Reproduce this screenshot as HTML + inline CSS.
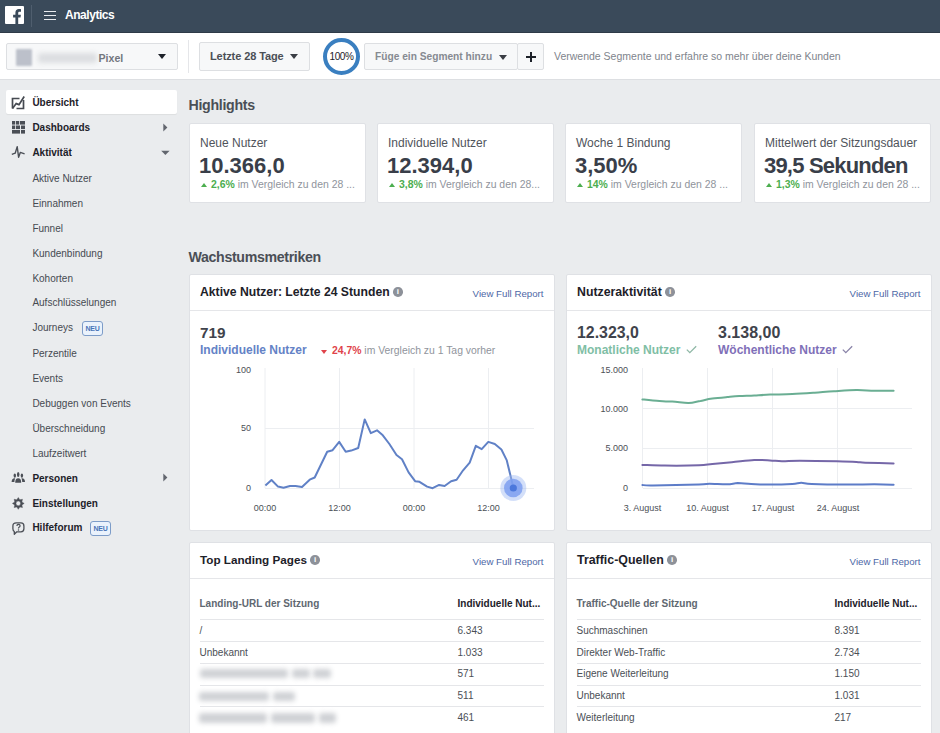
<!DOCTYPE html>
<html><head><meta charset="utf-8">
<style>
*{box-sizing:border-box;margin:0;padding:0}
html,body{width:940px;height:733px;overflow:hidden;background:#eaecee;font-family:"Liberation Sans",sans-serif;color:#1d2129}
.abs{position:absolute}
.t{position:absolute;white-space:nowrap;line-height:1}
#hdr{position:absolute;left:0;top:0;width:940px;height:33px;background:#3a4a5a;border-bottom:1px solid #2f3b48}
#tb{position:absolute;left:0;top:33px;width:940px;height:47px;background:#fff;border-bottom:1px solid #dddfe2}
.btn{position:absolute;background:#f7f8f9;border:1px solid #dddfe2;border-radius:2px}
.caret{position:absolute;width:0;height:0;border-left:4.4px solid transparent;border-right:4.4px solid transparent;border-top:5px solid #4b4f56}
.card{position:absolute;background:#fff;border:1px solid #dfe1e5;border-radius:2px}
.side{position:absolute;left:32.4px;font-size:10px;color:#464a51;white-space:nowrap;line-height:1}
.sideb{font-weight:bold;color:#1d2129}
.neu{position:absolute;border:1px solid #7d9cc8;background:#eaf2fc;color:#4a75b8;font-size:7px;font-weight:bold;border-radius:3px;width:21px;height:15px;line-height:13px;text-align:center;letter-spacing:-0.2px}
.info{position:absolute;width:10px;height:10px;border-radius:50%;background:#90949c;color:#fff;font-size:8px;font-weight:bold;text-align:center;line-height:10px}
.info2{display:inline-block;width:9.6px;height:9.6px;border-radius:50%;background:#8d9199;color:#fff;font-size:8px;font-weight:bold;text-align:center;line-height:10px;margin-left:3.5px;vertical-align:top;position:relative;top:1.4px}
.vfr{position:absolute;font-size:9.7px;color:#4d67a6;white-space:nowrap;line-height:1}
.row{position:absolute;height:1px;background:#e5e6e9}
.cell{position:absolute;font-size:10px;color:#4b4f56;white-space:nowrap;line-height:1}
.ax{position:absolute;font-size:9px;color:#4b4f56;white-space:nowrap;line-height:1}
.blur{position:absolute;background:#cfd1d5;filter:blur(2.8px);border-radius:3px}
</style></head><body>

<!-- header -->
<div id="hdr">
  <div class="abs" style="left:5px;top:5.5px;width:18.5px;height:18.8px;background:#fff;border-radius:1px;overflow:hidden">
    <svg width="19" height="19" viewBox="0 0 19 19" style="position:absolute;left:0;top:0"><path d="M13.2 19V11.6h2.3l.4-2.8h-2.7V7.1c0-.8.2-1.4 1.4-1.4h1.4V3.2c-.3 0-1.1-.1-2.1-.1-2.1 0-3.5 1.3-3.5 3.6v2.1H8.1v2.8h2.3V19z" fill="#3a4a5a"/></svg>
  </div>
  <div class="abs" style="left:31px;top:5px;width:1px;height:22px;background:#4f5e6e"></div>
  <div class="abs" style="left:44px;top:10.5px;width:12px;height:1.2px;background:#e8ebef"></div>
  <div class="abs" style="left:44px;top:14.5px;width:12px;height:1.2px;background:#e8ebef"></div>
  <div class="abs" style="left:44px;top:18.7px;width:12px;height:1.2px;background:#e8ebef"></div>
  <div class="t" style="left:65px;top:9px;font-size:12px;font-weight:bold;color:#fff;letter-spacing:-0.45px">Analytics</div>
</div>

<!-- toolbar -->
<div id="tb">
  <div class="btn" style="left:6px;top:10px;width:172px;height:27px">
    <div class="blur" style="left:8.5px;top:4.5px;width:16px;height:17px;background:#bcc0ca;filter:blur(1.2px);border-radius:1px"></div>
    <div class="blur" style="left:31px;top:8.5px;width:59px;height:10px;background:#dcdee1;filter:blur(2.5px)"></div>
    <div class="t" style="left:91.5px;top:8.5px;font-size:10.6px;font-weight:bold;color:#72767e">Pixel</div>
    <div class="caret" style="left:151px;top:10px;border-top-color:#1d2129"></div>
  </div>
  <div class="abs" style="left:188px;top:7px;width:1px;height:33px;background:#e5e6e9"></div>
  <div class="btn" style="left:199px;top:9px;width:111px;height:29px">
    <div class="t" style="left:10px;top:8.3px;font-size:11px;font-weight:bold;color:#4b4f56;letter-spacing:-0.1px">Letzte 28 Tage</div>
    <div class="caret" style="left:89.5px;top:11px;border-top-color:#3a3d44"></div>
  </div>
  <div class="abs" style="left:323px;top:5px;width:37px;height:37px;border-radius:50%;border:4px solid #3a7fc0;background:#fff"></div>
  <div class="t" style="left:327px;top:19px;width:29px;text-align:center;font-size:10px;color:#1d2129;letter-spacing:-0.4px">100%</div>
  <div class="btn" style="left:364px;top:10px;width:154px;height:27px">
    <div class="t" style="left:10px;top:8px;font-size:10.2px;font-weight:bold;color:#868a91">Füge ein Segment hinzu</div>
    <div class="caret" style="left:134px;top:10.5px;border-top-color:#3a3d44"></div>
  </div>
  <div class="btn" style="left:517px;top:10px;width:27px;height:27px">
    <div class="abs" style="left:8px;top:12.3px;width:10px;height:1.3px;background:#1d2129"></div>
    <div class="abs" style="left:12.4px;top:8px;width:1.3px;height:10px;background:#1d2129"></div>
  </div>
  <div class="t" style="left:554px;top:18px;font-size:10.5px;color:#80848c">Verwende Segmente und erfahre so mehr über deine Kunden</div>
</div>

<!-- sidebar -->
<div class="abs" style="left:6px;top:90px;width:171px;height:24px;background:#fff;border-radius:2px;box-shadow:0 1px 1px rgba(0,0,0,.06)"></div>
<div class="side sideb" style="top:98px">Übersicht</div>
<div class="side sideb" style="top:123px">Dashboards</div>
<div class="side sideb" style="top:148px">Aktivität</div>
<div class="side" style="top:173.5px">Aktive Nutzer</div>
<div class="side" style="top:198.5px">Einnahmen</div>
<div class="side" style="top:223.5px">Funnel</div>
<div class="side" style="top:248.5px">Kundenbindung</div>
<div class="side" style="top:273.5px">Kohorten</div>
<div class="side" style="top:298.4px">Aufschlüsselungen</div>
<div class="side" style="top:323.4px">Journeys</div>
<div class="side" style="top:348.5px">Perzentile</div>
<div class="side" style="top:373.5px">Events</div>
<div class="side" style="top:398.6px">Debuggen von Events</div>
<div class="side" style="top:423.6px">Überschneidung</div>
<div class="side" style="top:448.8px">Laufzeitwert</div>
<div class="side sideb" style="top:473.9px">Personen</div>
<div class="side sideb" style="top:498.9px">Einstellungen</div>
<div class="side sideb" style="top:523.4px">Hilfeforum</div>

<svg class="abs" style="left:0;top:85px" width="185" height="460" viewBox="0 85 185 460">
  <g fill="none" stroke="#464a51" stroke-width="1.7" stroke-linejoin="miter">
    <path d="M19.5,98.5 H12.5 V108.5"/>
    <path d="M16.5,108.5 H23.5 V100"/>
    <path d="M12.5,108.5 L16.2,103.6 L19,104.6 L24.2,96.5"/>
  </g>
  <g fill="#4b4f56">
    <rect x="12" y="121" width="3.2" height="3.6"/><rect x="16" y="121" width="3.2" height="3.6"/><rect x="20" y="121" width="5" height="3.6"/>
    <rect x="12" y="125.5" width="3.2" height="3.6"/><rect x="16" y="125.5" width="4" height="3.6"/><rect x="21" y="125.5" width="4" height="3.6"/>
    <rect x="12" y="130" width="8" height="3.6"/><rect x="21" y="130" width="4" height="3.6"/>
  </g>
  <path d="M11.8,154.3 L15.2,153.2 L17.2,146.6 L18.6,157.2 L20.3,152.4 L24.6,153.8" fill="none" stroke="#4b4f56" stroke-width="1.4" stroke-linejoin="round"/>
  <path d="M163.3,123.6 L167.4,127.5 L163.3,131.4 Z" fill="#62666e"/>
  <path d="M161.2,150.8 L169.6,150.8 L165.4,155 Z" fill="#62666e"/>
  <path d="M163.3,473.6 L167.4,477.5 L163.3,481.4 Z" fill="#62666e"/>
  <g fill="#4b4f56">
    <ellipse cx="18.2" cy="474.4" rx="1.25" ry="2.5"/>
    <path d="M15.2,482.8 C15.2,479.6 16.2,478.3 18.2,478.3 C20.2,478.3 21.2,479.6 21.2,482.8 Z"/>
    <ellipse cx="14.8" cy="475.6" rx="1.2" ry="2.2"/>
    <path d="M11.6,482 C11.6,479.6 12.6,478.2 14.6,478.2 L15.2,478.4 C14.6,479.3 14.4,480.6 14.4,482 Z"/>
    <ellipse cx="21.9" cy="475.6" rx="1.2" ry="2.2"/>
    <path d="M25,482 C25,479.6 24,478.2 22,478.2 L21.4,478.4 C22,479.3 22.2,480.6 22.2,482 Z"/>
  </g>
  <g transform="translate(18.3,503.4)">
    <path fill="#4b4f56" fill-rule="evenodd" stroke="#4b4f56" stroke-width="0.4" stroke-linejoin="round" d="M0.00,-5.90 L1.49,-3.60 L4.17,-4.17 L3.60,-1.49 L5.90,0.00 L3.60,1.49 L4.17,4.17 L1.49,3.60 L0.00,5.90 L-1.49,3.60 L-4.17,4.17 L-3.60,1.49 L-5.90,0.00 L-3.60,-1.49 L-4.17,-4.17 L-1.49,-3.60 Z M2.3,0 A2.3,2.3 0 1 0 -2.3,0 A2.3,2.3 0 1 0 2.3,0 Z"/>
  </g>
  <path d="M16.3,522.9 H20.9 Q23.9,522.9 23.9,525.9 V528.8 Q23.9,531.8 20.9,531.8 H16.8 L14.3,534.3 V531.5 Q12.9,530.8 12.9,528.8 V525.9 Q12.9,522.9 16.3,522.9 Z" fill="none" stroke="#4b4f56" stroke-width="1.3" stroke-linejoin="round"/>
  <path d="M16.9,525.9 Q16.9,524.3 18.5,524.3 Q20.1,524.3 20.1,525.8 Q20.1,526.8 19,527.3 Q18.5,527.6 18.5,528.4" fill="none" stroke="#4b4f56" stroke-width="1.2"/>
  <circle cx="18.5" cy="530" r="0.75" fill="#4b4f56"/>
</svg>
<div class="neu" style="left:82px;top:320.5px">NEU</div>
<div class="neu" style="left:90px;top:520.5px">NEU</div>
<!-- main -->
<div class="t" style="left:188.5px;top:98px;font-size:14.2px;font-weight:bold;color:#4b4f56;letter-spacing:-0.3px">Highlights</div>
<div class="card" style="left:189px;top:123px;width:177px;height:80px">
  <div class="t" style="left:10px;top:13.4px;font-size:12px;color:#50545b">Neue Nutzer</div>
  <div class="t" style="left:9px;top:31px;font-size:22px;font-weight:bold;color:#393e49">10.366,0</div>
  <div class="abs" style="left:10.5px;top:58.5px;width:0;height:0;border-left:3.5px solid transparent;border-right:3.5px solid transparent;border-bottom:4.5px solid #4cae4f"></div>
  <div class="t" style="left:21px;top:56px;font-size:10.45px;color:#90949c"><b style="color:#4cae4f">2,6%</b> im Vergleich zu den 28 ...</div>
</div>
<div class="card" style="left:377px;top:123px;width:177px;height:80px">
  <div class="t" style="left:10px;top:13.4px;font-size:12px;color:#50545b">Individuelle Nutzer</div>
  <div class="t" style="left:9px;top:31px;font-size:22px;font-weight:bold;color:#393e49">12.394,0</div>
  <div class="abs" style="left:10.5px;top:58.5px;width:0;height:0;border-left:3.5px solid transparent;border-right:3.5px solid transparent;border-bottom:4.5px solid #4cae4f"></div>
  <div class="t" style="left:21px;top:56px;font-size:10.45px;color:#90949c"><b style="color:#4cae4f">3,8%</b> im Vergleich zu den 28...</div>
</div>
<div class="card" style="left:565px;top:123px;width:177px;height:80px">
  <div class="t" style="left:10px;top:13.4px;font-size:12px;color:#50545b">Woche 1 Bindung</div>
  <div class="t" style="left:9px;top:31px;font-size:22px;font-weight:bold;color:#393e49">3,50%</div>
  <div class="abs" style="left:10.5px;top:58.5px;width:0;height:0;border-left:3.5px solid transparent;border-right:3.5px solid transparent;border-bottom:4.5px solid #4cae4f"></div>
  <div class="t" style="left:21px;top:56px;font-size:10.45px;color:#90949c"><b style="color:#4cae4f">14%</b> im Vergleich zu den 28 ...</div>
</div>
<div class="card" style="left:754px;top:123px;width:177px;height:80px">
  <div class="t" style="left:10px;top:13.4px;font-size:12px;color:#50545b">Mittelwert der Sitzungsdauer</div>
  <div class="t" style="left:9px;top:31px;font-size:22px;font-weight:bold;color:#393e49;letter-spacing:-0.8px">39,5 Sekunden</div>
  <div class="abs" style="left:10.5px;top:58.5px;width:0;height:0;border-left:3.5px solid transparent;border-right:3.5px solid transparent;border-bottom:4.5px solid #4cae4f"></div>
  <div class="t" style="left:21px;top:56px;font-size:10.45px;color:#90949c"><b style="color:#4cae4f">1,3%</b> im Vergleich zu den 28 ...</div>
</div>

<div class="t" style="left:188.5px;top:250px;font-size:14.2px;font-weight:bold;color:#4b4f56;letter-spacing:-0.35px">Wachstumsmetriken</div>

<div class="card" style="left:189px;top:274px;width:366px;height:257px">
  <div class="t" style="left:10px;top:11px;font-size:12.2px;font-weight:bold;color:#1d2129">Aktive Nutzer: Letzte 24 Stunden<span class="info2">i</span></div>
  <div class="vfr" style="right:10.5px;top:14px">View Full Report</div>
  <div class="abs" style="left:0;top:35px;width:100%;height:1px;background:#e5e6e9"></div>
  <div class="t" style="left:10px;top:49.5px;font-size:15.3px;font-weight:bold;color:#3f434c">719</div>
  <div class="t" style="left:10px;top:69px;font-size:12px;font-weight:bold;color:#6482c6">Individuelle Nutzer</div>
  <div class="abs" style="left:131px;top:74.5px;width:0;height:0;border-left:3.3px solid transparent;border-right:3.3px solid transparent;border-top:4px solid #e0434a"></div>
  <div class="t" style="left:142px;top:70.5px;font-size:10.4px;color:#90949c"><b style="color:#e0434a">24,7%</b> im Vergleich zu 1 Tag vorher</div>
</div>
<div class="card" style="left:566px;top:274px;width:366px;height:257px">
  <div class="t" style="left:10px;top:11px;font-size:12.3px;font-weight:bold;color:#1d2129">Nutzeraktivität<span class="info2">i</span></div>
  <div class="vfr" style="right:10.5px;top:14px">View Full Report</div>
  <div class="abs" style="left:0;top:35px;width:100%;height:1px;background:#e5e6e9"></div>
  <div class="t" style="left:10px;top:49.5px;font-size:15.9px;font-weight:bold;color:#3f434c">12.323,0</div>
  <div class="t" style="left:10px;top:69px;font-size:12px;font-weight:bold;color:#80bea5">Monatliche Nutzer <svg width="11" height="9" viewBox="0 0 11 9" style="position:relative;top:0px;margin-left:2px"><path d="M0.8,4.6 L3.8,7.6 L10.2,1.2" fill="none" stroke="#8fb8a6" stroke-width="1.3"/></svg></div>
  <div class="t" style="left:151px;top:49.5px;font-size:16px;font-weight:bold;color:#3f434c">3.138,00</div>
  <div class="t" style="left:151px;top:69px;font-size:12px;font-weight:bold;color:#7f70b8">Wöchentliche Nutzer <svg width="11" height="9" viewBox="0 0 11 9" style="position:relative;top:0px;margin-left:2px"><path d="M0.8,4.6 L3.8,7.6 L10.2,1.2" fill="none" stroke="#8a84a8" stroke-width="1.3"/></svg></div>
</div>
<div class="card" style="left:189px;top:542px;width:366px;height:200px">
  <div class="t" style="left:10px;top:11px;font-size:11.7px;font-weight:bold;color:#1d2129">Top Landing Pages<span class="info2">i</span></div>
  <div class="vfr" style="right:10.5px;top:14px">View Full Report</div>
  <div class="abs" style="left:0;top:35px;width:100%;height:1px;background:#e5e6e9"></div>
</div>
<div class="card" style="left:566px;top:542px;width:366px;height:200px">
  <div class="t" style="left:10px;top:11px;font-size:12.4px;font-weight:bold;color:#1d2129">Traffic-Quellen<span class="info2">i</span></div>
  <div class="vfr" style="right:10.5px;top:14px">View Full Report</div>
  <div class="abs" style="left:0;top:35px;width:100%;height:1px;background:#e5e6e9"></div>
</div>

<svg class="abs" style="left:0;top:0" width="940" height="733" viewBox="0 0 940 733">
  <g stroke="#eceef1" stroke-width="1" fill="none">
    <path d="M265,428.5 H534 M265,488.5 H534"/>
    <path d="M265,368 V488 M339.5,368 V488 M414,368 V488 M488.5,368 V488"/>
    <path d="M643,408.5 H912 M643,448.5 H912 M643,488.5 H912"/>
    <path d="M642.5,368 V488 M707.5,368 V488 M772.5,368 V488 M837.5,368 V488"/>
  </g>
  <path d="M265.4,485.5 L271.5,480.0 L278.0,486.6 L283.5,487.7 L290.0,486.0 L295.5,486.0 L302.0,487.0 L309.7,479.7 L314.7,477.5 L327.2,451.7 L332.6,450.2 L339.2,441.9 L345.7,451.7 L351.2,450.6 L358.2,448.0 L364.7,419.4 L370.8,433.1 L377.0,430.3 L382.8,435.3 L389.4,444.0 L396.5,455.0 L402.0,459.3 L408.6,472.4 L415.1,481.2 L419.5,481.8 L427.1,486.6 L432.6,488.2 L439.1,484.9 L444.6,486.0 L451.1,481.2 L456.6,479.7 L463.1,470.3 L469.7,462.6 L475.8,445.8 L481.7,449.1 L488.3,441.9 L494.8,444.0 L501.4,449.5 L506.8,460.4 L513.4,487.7" fill="none" stroke="#6081c6" stroke-width="2" stroke-linejoin="round"/>
  <circle cx="513.3" cy="488" r="13" fill="#9db8f2" fill-opacity="0.45"/>
  <circle cx="513.3" cy="488" r="9.3" fill="#7c9ff0" fill-opacity="0.85"/>
  <circle cx="513.3" cy="488" r="3.6" fill="#4c78dc"/>
  <path d="M642.4,399.4 C644.1,399.6 647.9,400.2 652.9,400.6 C657.9,401.0 666.2,401.2 672.2,401.6 C678.2,402.0 683.9,403.2 688.6,403.1 C693.3,403.0 696.5,401.6 700.5,400.9 C704.5,400.1 707.9,399.2 712.4,398.6 C716.9,398.0 722.8,397.5 727.3,397.1 C731.8,396.7 734.8,396.4 739.3,396.1 C743.8,395.8 749.1,395.8 754.2,395.5 C759.3,395.2 763.6,394.8 770.0,394.6 C776.4,394.4 784.8,394.4 792.3,394.1 C799.8,393.8 807.8,393.2 814.7,392.7 C821.7,392.2 827.0,391.6 834.0,391.2 C841.0,390.8 849.7,390.2 856.4,390.1 C863.1,390.0 868.1,390.6 874.3,390.7 C880.5,390.8 890.4,390.7 893.6,390.7" fill="none" stroke="#6aae93" stroke-width="2" stroke-linecap="round"/>
  <path d="M642.4,464.9 C646.1,465.0 655.4,465.5 664.8,465.6 C674.2,465.7 691.1,465.6 699.0,465.3 C706.9,465.0 706.9,464.4 712.4,463.9 C717.9,463.4 724.8,462.8 731.8,462.2 C738.8,461.6 747.8,460.4 754.2,460.1 C760.6,459.8 765.4,460.2 770.0,460.4 C774.6,460.6 776.9,461.2 781.9,461.3 C786.9,461.4 790.6,460.7 799.8,460.7 C809.0,460.7 827.6,461.0 837.0,461.2 C846.4,461.4 851.7,461.6 856.4,461.9 C861.1,462.1 859.1,462.4 865.3,462.7 C871.5,462.9 888.9,463.3 893.6,463.4" fill="none" stroke="#7567a8" stroke-width="2" stroke-linecap="round"/>
  <path d="M642.4,485.0 C644.1,485.1 643.5,485.5 652.9,485.4 C662.3,485.3 689.6,484.9 699.0,484.6 C708.4,484.3 704.8,483.9 709.5,483.8 C714.2,483.8 722.6,484.4 727.3,484.3 C732.0,484.2 733.8,483.2 737.8,483.1 C741.8,483.1 745.8,483.8 751.2,484.0 C756.6,484.2 763.1,484.6 770.0,484.6 C776.9,484.6 787.1,484.3 792.3,484.0 C797.5,483.7 798.1,482.8 801.3,482.8 C804.5,482.8 804.5,483.7 811.7,484.0 C818.9,484.3 834.1,484.6 844.5,484.6 C854.9,484.7 866.1,484.3 874.3,484.3 C882.5,484.3 890.4,484.6 893.6,484.7" fill="none" stroke="#5d7cc8" stroke-width="2" stroke-linecap="round"/>
</svg>
<div class="ax" style="left:221px;top:365.5px;width:30px;text-align:right">100</div>
<div class="ax" style="left:221px;top:424px;width:30px;text-align:right">50</div>
<div class="ax" style="left:221px;top:483.5px;width:30px;text-align:right">0</div>
<div class="ax" style="left:235px;top:503.5px;width:60px;text-align:center">00:00</div>
<div class="ax" style="left:309.5px;top:503.5px;width:60px;text-align:center">12:00</div>
<div class="ax" style="left:384px;top:503.5px;width:60px;text-align:center">00:00</div>
<div class="ax" style="left:458.5px;top:503.5px;width:60px;text-align:center">12:00</div>
<div class="ax" style="left:578px;top:366px;width:50px;text-align:right">15.000</div>
<div class="ax" style="left:578px;top:405px;width:50px;text-align:right">10.000</div>
<div class="ax" style="left:578px;top:444px;width:50px;text-align:right">5.000</div>
<div class="ax" style="left:578px;top:484px;width:50px;text-align:right">0</div>
<div class="ax" style="left:602.5px;top:503.5px;width:80px;text-align:center">3. August</div>
<div class="ax" style="left:667.5px;top:503.5px;width:80px;text-align:center">10. August</div>
<div class="ax" style="left:733px;top:503.5px;width:80px;text-align:center">17. August</div>
<div class="ax" style="left:798px;top:503.5px;width:80px;text-align:center">24. August</div>
<div class="cell" style="left:199.5px;top:598.5px;font-weight:bold;color:#606770">Landing-URL der Sitzung</div>
<div class="cell" style="left:457.5px;top:598.5px;font-weight:bold;color:#1d2129">Individuelle Nut...</div>
<div class="row" style="left:199.5px;top:618.7px;width:344.5px"></div>
<div class="cell" style="left:199.5px;top:625.8px">/</div>
<div class="cell" style="left:457.5px;top:625.8px">6.343</div>
<div class="row" style="left:199.5px;top:641.1px;width:344.5px"></div>
<div class="cell" style="left:199.5px;top:647.8px">Unbekannt</div>
<div class="cell" style="left:457.5px;top:647.8px">1.033</div>
<div class="row" style="left:199.5px;top:663.0px;width:344.5px"></div>
<div class="blur" style="left:200px;top:669px;width:88px;height:9px"></div><div class="blur" style="left:292px;top:669px;width:18px;height:9px"></div><div class="blur" style="left:313px;top:669px;width:18px;height:9px"></div>
<div class="cell" style="left:457.5px;top:669.3px">571</div>
<div class="row" style="left:199.5px;top:684.9px;width:344.5px"></div>
<div class="blur" style="left:199px;top:691.5px;width:70px;height:9px"></div><div class="blur" style="left:273px;top:691.5px;width:22px;height:9px"></div>
<div class="cell" style="left:457.5px;top:691.3px">511</div>
<div class="row" style="left:199.5px;top:706.2px;width:344.5px"></div>
<div class="blur" style="left:199px;top:713px;width:68px;height:9.5px"></div><div class="blur" style="left:271px;top:713px;width:44px;height:9.5px"></div><div class="blur" style="left:319px;top:713px;width:17px;height:9.5px"></div>
<div class="cell" style="left:457.5px;top:712.8px">461</div>

<div class="cell" style="left:576.5px;top:598.5px;font-weight:bold;color:#606770">Traffic-Quelle der Sitzung</div>
<div class="cell" style="left:834.5px;top:598.5px;font-weight:bold;color:#1d2129">Individuelle Nut...</div>
<div class="row" style="left:576.5px;top:618.7px;width:344.5px"></div>
<div class="cell" style="left:576.5px;top:625.8px">Suchmaschinen</div>
<div class="cell" style="left:834.5px;top:625.8px">8.391</div>
<div class="row" style="left:576.5px;top:641.1px;width:344.5px"></div>
<div class="cell" style="left:576.5px;top:647.8px">Direkter Web-Traffic</div>
<div class="cell" style="left:834.5px;top:647.8px">2.734</div>
<div class="row" style="left:576.5px;top:663.0px;width:344.5px"></div>
<div class="cell" style="left:576.5px;top:669.3px">Eigene Weiterleitung</div>
<div class="cell" style="left:834.5px;top:669.3px">1.150</div>
<div class="row" style="left:576.5px;top:684.9px;width:344.5px"></div>
<div class="cell" style="left:576.5px;top:691.3px">Unbekannt</div>
<div class="cell" style="left:834.5px;top:691.3px">1.031</div>
<div class="row" style="left:576.5px;top:706.2px;width:344.5px"></div>
<div class="cell" style="left:576.5px;top:712.8px">Weiterleitung</div>
<div class="cell" style="left:834.5px;top:712.8px">217</div>

</body></html>
